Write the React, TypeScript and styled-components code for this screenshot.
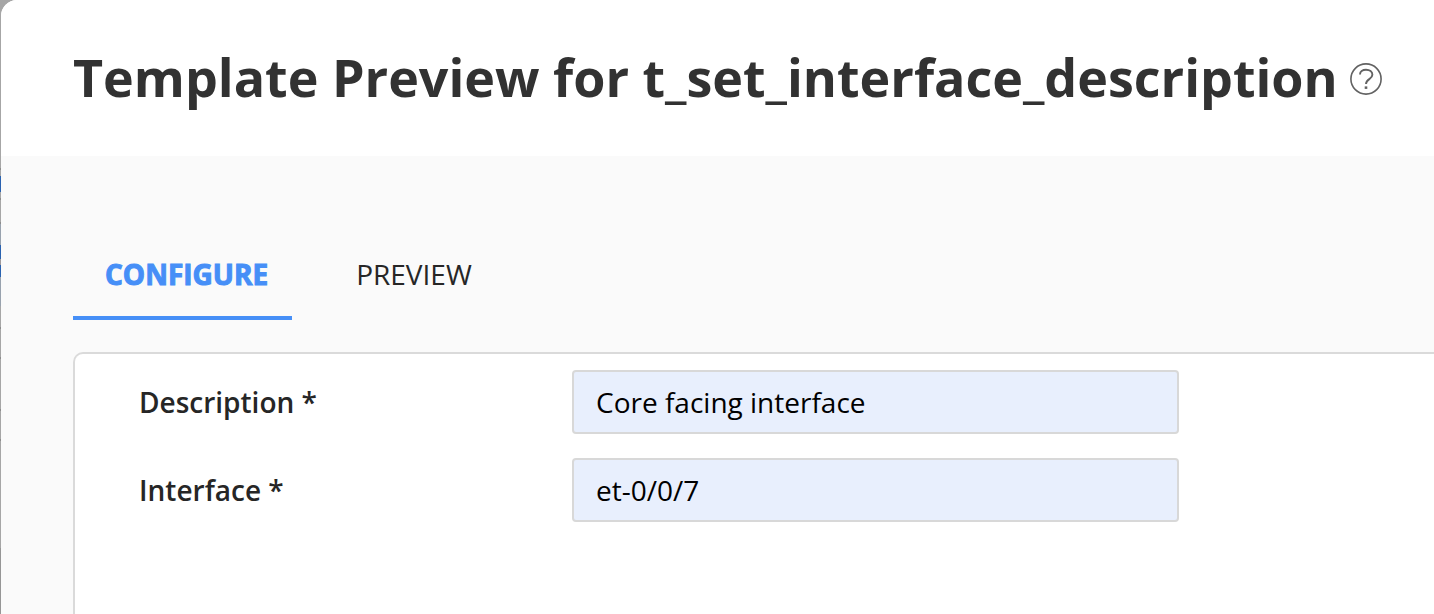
import React, { useState } from "react";
import styled, { createGlobalStyle } from "styled-components";

const GlobalStyle = createGlobalStyle`
  *, *::before, *::after { box-sizing: border-box; }
  body {
    margin: 0;
    background: #a6a6a6;
    color: #262626;
    font-family: "Open Sans", sans-serif;
    font-size: 28px;
  }
`;

/* The dimmed page behind the dialog shows as a thin strip at the left edge. */
const Backdrop = styled.div`
  min-height: 100vh;
  padding-left: 1px;
  display: flex;
  overflow: hidden;
  background: linear-gradient(
    to bottom,
    #a6a6a6 0 168px,
    #8c8c8c 168px 170px,
    #a6a6a6 170px 176px,
    #2a62b0 176px 192px,
    #a6a6a6 192px 198px,
    #8c8c8c 198px 200px,
    #a6a6a6 200px 222px,
    #8c8c8c 222px 224px,
    #98a2ae 224px 245px,
    #2a62b0 245px 259px,
    #a09a9a 259px 265px,
    #2a62b0 265px 277px,
    #98a2ae 277px 306px,
    #a6a6a6 306px 327px,
    #8c8c8c 327px 329px,
    #a6a6a6 329px 357px,
    #8c8c8c 357px 359px,
    #a6a6a6 359px 409px,
    #8c8c8c 409px 411px,
    #a6a6a6 411px 439px,
    #8c8c8c 439px 441px,
    #a6a6a6 441px 548px,
    #969696 548px
  );
`;

const Dialog = styled.main`
  flex: 1;
  min-width: 0;
  display: flex;
  flex-direction: column;
  background: #fafafa;
  border-top-left-radius: 16px;
  overflow: hidden;
`;

const Header = styled.header`
  display: flex;
  align-items: center;
  gap: 12px;
  padding: 38px 48px 40px 72px;
  background: #ffffff;
`;

const Title = styled.h1`
  margin: 0;
  color: #323232;
  font-size: 52px;
  font-weight: 700;
  line-height: 78px;
  white-space: nowrap;
`;

const HelpButton = styled.button`
  display: flex;
  padding: 4px 0 0;
  border: 0;
  background: none;
  color: #626262;
`;

const Body = styled.section`
  flex: 1;
  display: flex;
  flex-direction: column;
  padding: 76px 0 0 72px;
`;

const TabList = styled.div`
  display: flex;
  gap: 32px;
  margin-bottom: 32px;
`;

const Tab = styled.button<{ $active: boolean }>`
  height: 88px;
  padding: 0 24px 0 32px;
  border: 0;
  border-bottom: 4px solid ${(p) => (p.$active ? "#468ff7" : "transparent")};
  background: none;
  color: ${(p) => (p.$active ? "#468ff7" : "#262626")};
  font-family: inherit;
  font-size: 28px;
  font-weight: ${(p) => (p.$active ? 700 : 400)};
  -webkit-text-stroke: ${(p) => (p.$active ? "1px currentColor" : "0")};
`;

const Panel = styled.form`
  flex: 1;
  display: flex;
  flex-direction: column;
  gap: 24px;
  padding: 16px 255px 16px 64px;
  border: 2px solid #dadada;
  border-width: 2px 0 0 2px;
  border-top-left-radius: 10px;
  background: #ffffff;
`;

const Field = styled.div`
  display: grid;
  grid-template-columns: 433px 1fr;
  align-items: center;
`;

const Label = styled.label`
  font-weight: 600;
`;

const TextInput = styled.input`
  width: 100%;
  height: 64px;
  padding: 0 22px;
  border: 2px solid #d8d8d8;
  border-radius: 4px;
  background: #e8effd;
  color: #000000;
  font-family: inherit;
  font-size: 28px;
`;

const tabs = ["CONFIGURE", "PREVIEW"];

export default function App() {
  const [active, setActive] = useState(tabs[0]);
  return (
    <Backdrop>
      <GlobalStyle />
      <Dialog>
        <Header>
          <Title>Template Preview for t_set_interface_description</Title>
          <HelpButton type="button" aria-label="Help">
            <svg width="32" height="32" viewBox="0 0 32 32" fill="none" stroke="currentColor" strokeWidth="1.6">
              <circle cx="16" cy="16" r="15.100" />
              <path d="M10 11.500C10 8.600 12.600 6.800 16 6.800c3.700 0 6.400 1.900 6.400 4.900 0 4.600-6.400 4.300-6.400 9.300" strokeWidth="1.900" />
              <rect x="14.700" y="23.400" width="2.600" height="2.500" fill="currentColor" stroke="none" />
            </svg>
          </HelpButton>
        </Header>
        <Body>
          <TabList role="tablist">
            {tabs.map((name) => (
              <Tab
                key={name}
                type="button"
                role="tab"
                aria-selected={name === active}
                $active={name === active}
                onClick={() => setActive(name)}
              >
                {name}
              </Tab>
            ))}
          </TabList>
          <Panel>
            <Field>
              <Label htmlFor="description">Description *</Label>
              <TextInput id="description" defaultValue="Core facing interface" />
            </Field>
            <Field>
              <Label htmlFor="interface">Interface *</Label>
              <TextInput id="interface" defaultValue="et-0/0/7" />
            </Field>
          </Panel>
        </Body>
      </Dialog>
    </Backdrop>
  );
}
